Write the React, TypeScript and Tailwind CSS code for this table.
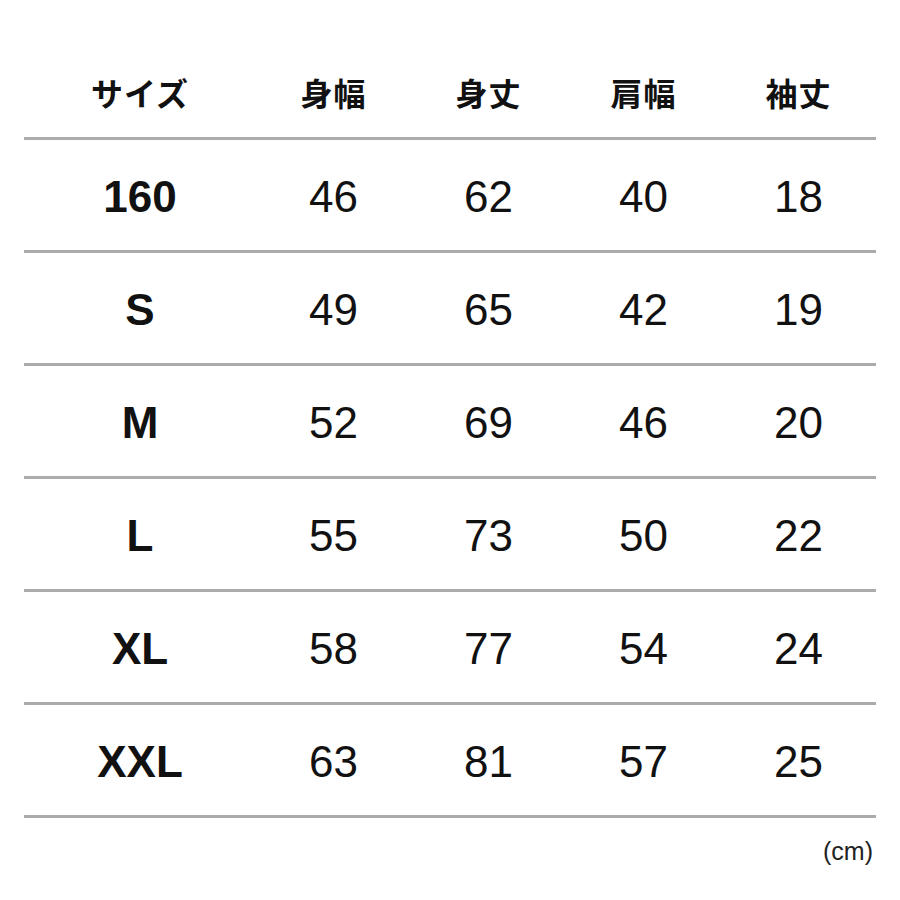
import React from 'react';

const headers = ['サイズ', '身幅', '身丈', '肩幅', '袖丈'];

const rows: [string, string, string, string, string][] = [
  ['160', '46', '62', '40', '18'],
  ['S', '49', '65', '42', '19'],
  ['M', '52', '69', '46', '20'],
  ['L', '55', '73', '50', '22'],
  ['XL', '58', '77', '54', '24'],
  ['XXL', '63', '81', '57', '25'],
];

const cols = 'grid grid-cols-[232px_155px_155px_155px_155px]';

export default function App() {
  return (
    <div
      className="w-[900px] h-[900px] bg-white text-[#111] px-[24px] pt-[47px]"
      style={{ fontFamily: '"Liberation Sans", "Noto Sans CJK JP", sans-serif' }}
    >
      <div className={`${cols} h-[93px] border-b-[3px] border-[#ababab] items-center pt-[5px]`}>
        {headers.map((h, i) => (
          <div key={i} className="text-center text-[32px] font-bold tracking-[1px]">
            {h}
          </div>
        ))}
      </div>
      {rows.map((r, ri) => (
        <div key={ri} className={`${cols} h-[113px] border-b-[3px] border-[#ababab] items-center pt-[3px]`}>
          {r.map((v, i) => (
            <div key={i} className={`text-center text-[44px] leading-none ${i === 0 ? 'font-bold' : 'font-normal'}`}>
              {v}
            </div>
          ))}
        </div>
      ))}
      <div className="flex justify-end pt-[15px] pr-[3px] text-[25px] text-[#222]">(cm)</div>
    </div>
  );
}
